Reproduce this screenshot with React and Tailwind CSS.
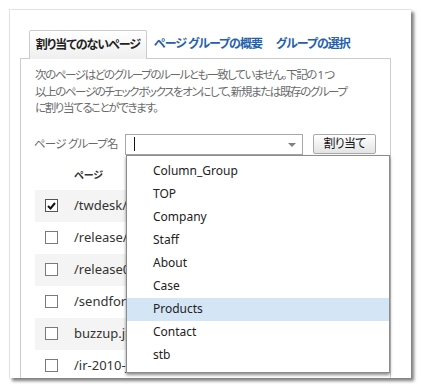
import React from "react";

const rows = [
  { path: "/twdesk/index.html", checked: true },
  { path: "/release/2010.html", checked: false },
  { path: "/release0501.html", checked: false },
  { path: "/sendform.html", checked: false },
  { path: "buzzup.jpg", checked: false },
  { path: "/ir-2010-jp.html", checked: false },
];

const groups = [
  "Column_Group",
  "TOP",
  "Company",
  "Staff",
  "About",
  "Case",
  "Products",
  "Contact",
  "stb",
];

function Checkbox({ checked }) {
  return (
    <div
      className={
        "w-[13px] h-[13px] border bg-white flex items-center justify-center " +
        (checked ? "border-[#555]" : "border-[#7a7a7a]")
      }
    >
      {checked && (
        <svg width="9" height="8" viewBox="0 0 9 8">
          <path d="M1 4 L3.5 6.5 L8 1" fill="none" stroke="#111" strokeWidth="2" />
        </svg>
      )}
    </div>
  );
}

export default function App() {
  return (
    <div className="w-[421px] h-[388px] bg-white pt-[9px] pl-[9px] font-['Noto_Sans','Noto_Sans_CJK_JP',sans-serif] [font-feature-settings:'palt']">
      <div className="w-[402px] h-[369px] bg-white border-l border-t border-[#e2e2e2] shadow-[3px_3px_3px_rgba(0,0,0,0.5)] overflow-hidden pt-[19px] pl-[10px]">
        {/* tabs */}
        <div className="flex items-end h-[29px] pl-[9px] text-[12px] font-bold whitespace-nowrap tracking-[-1px]">
          <div className="relative z-10 h-[29px] w-[118px] border border-b-0 border-[#cccccc] rounded-t-[2px] bg-gradient-to-b from-white to-[#efefef] flex items-center justify-center text-[#222] -mb-px">
            割り当てのないページ
          </div>
          <div className="h-[28px] flex items-center pl-[7px] text-[#2460ad]">
            ページ グループの概要
          </div>
          <div className="h-[28px] flex items-center pl-[14px] text-[#2460ad]">
            グループの選択
          </div>
        </div>

        {/* panel */}
        <div className="w-[371px] h-[330px] border border-[#cccccc] pl-[14px] pr-[14px]">
          <p className="pt-[8px] text-[11.5px] leading-[16.5px] text-[#6a6a6a] whitespace-nowrap tracking-[-1.4px]">
            次のページはどのグループのルールとも一致していません。下記の 1 つ
            <br />
            以上のページのチェックボックスをオンにして、新規または既存のグループ
            <br />
            に割り当てることができます。
          </p>

          <div className="flex items-center mt-[17px] h-[21px]">
            <span className="w-[91px] text-[11.5px] text-[#6a6a6a] -ml-px whitespace-nowrap tracking-[-0.8px]">
              ページ グループ名
            </span>
            <div className="relative w-[178px] h-[21px] border border-[#a7a7a7] bg-white flex items-center">
              <span className="ml-[8px] w-px h-[14px] bg-[#111]" />
              <span className="absolute right-[6px] top-[8px] w-0 h-0 border-l-[4px] border-r-[4px] border-t-[4px] border-l-transparent border-r-transparent border-t-[#808080]" />
              {/* dropdown list */}
              <div className="absolute left-0 top-[20px] z-20 w-[264px] h-[218px] bg-white border border-[#8c8c8c] shadow-[0_2px_3px_rgba(0,0,0,0.45)] pt-[4px]">
                {groups.map((g) => (
                  <div
                    key={g}
                    className={
                      "h-[23px] flex items-center pl-[26px] text-[12px] text-[#222] " +
                      (g === "Products" ? "bg-[#d4e6f6]" : "")
                    }
                  >
                    {g}
                  </div>
                ))}
              </div>
            </div>
            <button className="ml-[10px] w-[63px] h-[20px] border border-[#a9a9a9] rounded-[2px] bg-gradient-to-b from-white to-[#e4e4e4] text-[12px] text-[#111] flex items-center justify-center tracking-[-0.8px]">
              割り当て
            </button>
          </div>

          {/* table */}
          <div className="mt-[14px]">
            <div className="h-[14px] flex items-center pl-[39px] text-[10px] font-bold text-[#333]">
              ページ
            </div>
            <div className="mt-[7px]">
              {rows.map((r, i) => (
                <div
                  key={r.path}
                  className={
                    "h-[32px] flex items-center pl-[10px] " +
                    (i % 2 === 0 ? "bg-[#f4f4f4]" : "bg-white")
                  }
                >
                  <Checkbox checked={r.checked} />
                  <span className="ml-[16px] text-[13px] text-[#333]">{r.path}</span>
                </div>
              ))}
            </div>
          </div>
        </div>
      </div>
    </div>
  );
}
